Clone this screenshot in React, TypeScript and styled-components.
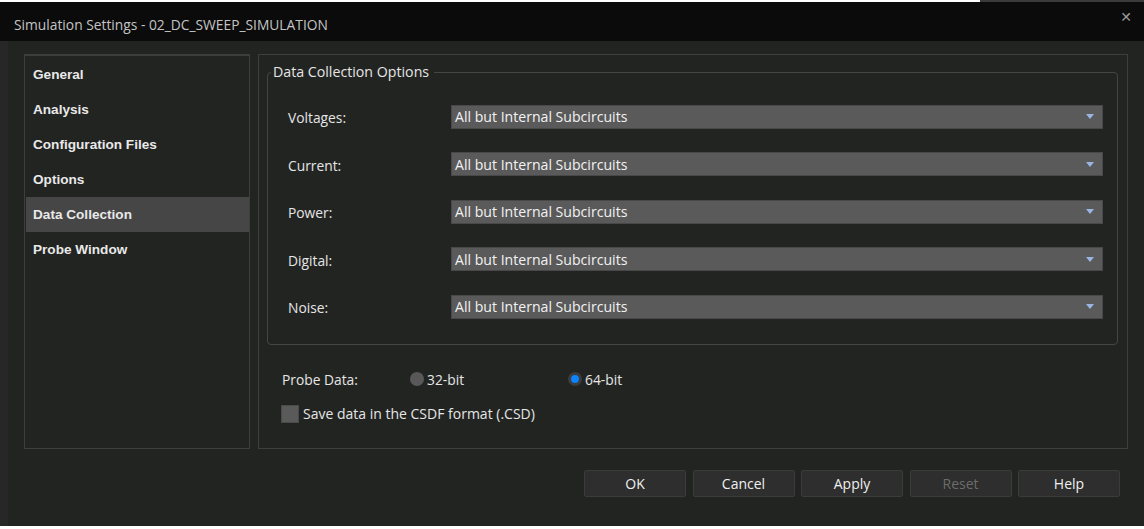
import React from 'react'
import styled, { createGlobalStyle } from 'styled-components'

const GlobalStyle = createGlobalStyle`
  html, body {
    margin: 0;
    padding: 0;
    background: #ffffff;
    overflow: hidden;
  }
`

const Screen = styled.div`
  width: 1144px;
  height: 529px;
  display: flex;
  flex-direction: column;
  background: #ffffff;
`

const TopStrip = styled.div`
  height: 2px;
  background: linear-gradient(to right, #ffffff 0, #ffffff 980px, #3a3a3a 980px);
`

const Dialog = styled.div`
  height: 524px;
  display: flex;
  flex-direction: column;
`

const TitleBar = styled.div`
  height: 39px;
  background: #0b0b0b;
  display: flex;
  align-items: center;
  justify-content: space-between;
  padding: 6px 12px 0 14px;
  box-sizing: border-box;
`

const Title = styled.div`
  font-family: 'Open Sans', sans-serif;
  font-size: 13.8px;
  color: #c4c4c4;
`

const Close = styled.div`
  color: #9a9a9a;
  font-family: 'DejaVu Sans', sans-serif;
  font-size: 14px;
  margin-top: -16px;
`

const Body = styled.div`
  flex: 1;
  background: #222422;
  border-left: 8px solid #262726;
  display: flex;
  flex-direction: column;
  padding: 13px 16px 0 16px;
`

const Panels = styled.div`
  display: flex;
  gap: 8px;
  height: 395px;
`

const Nav = styled.div`
  width: 226px;
  box-sizing: border-box;
  border: 1px solid #3d3f3d;
  border-top: 2px solid #3d3f3d;
  padding: 1px 0 0 1px;
  display: flex;
  flex-direction: column;
`

const NavItem = styled.div<{ $active?: boolean }>`
  height: 35px;
  display: flex;
  align-items: center;
  padding-left: 7px;
  font-family: 'Liberation Sans', Arial, sans-serif;
  font-weight: bold;
  font-size: 13.6px;
  color: #e9e9e9;
  background: ${(p) => (p.$active ? '#464646' : 'transparent')};
`

const Content = styled.div`
  flex: 1;
  box-sizing: border-box;
  border: 1px solid #3d3f3d;
  padding: 17px 9px 0 8px;
  display: flex;
  flex-direction: column;
`

const Group = styled.div`
  position: relative;
  height: 273px;
  box-sizing: border-box;
  border: 1px solid #444644;
  border-radius: 4px;
  padding: 20px 14px 0 20px;
  display: flex;
  flex-direction: column;
`

const Legend = styled.div`
  position: absolute;
  top: -11px;
  left: 3px;
  padding: 0 5px 0 2px;
  background: #222422;
  font-family: 'Open Sans', sans-serif;
  font-size: 14.2px;
  color: #e6e6e6;
`

const Row = styled.div`
  height: 47.5px;
  display: flex;
  align-items: center;
`

const Label = styled.div`
  width: 163px;
  font-family: 'Open Sans', sans-serif;
  font-size: 13.8px;
  color: #e6e6e6;
  padding-top: 2px;
`

const Select = styled.div`
  flex: 1;
  height: 24px;
  box-sizing: border-box;
  background: #5a5a5a;
  border: 1px solid #484848;
  display: flex;
  align-items: center;
  justify-content: space-between;
  padding: 0 8px 0 3px;
  font-family: 'Open Sans', sans-serif;
  font-size: 14.1px;
  color: #f2f2f2;
`

const Arrow = styled.div`
  width: 0;
  height: 0;
  border-left: 4px solid transparent;
  border-right: 4px solid transparent;
  border-top: 5px solid #9bb4e0;
`

const ProbeRow = styled.div`
  display: flex;
  align-items: center;
  margin-top: 24px;
  padding-left: 15px;
  height: 20px;
  font-family: 'Open Sans', sans-serif;
  font-size: 13.8px;
  color: #e6e6e6;
`

const ProbeLabel = styled.div`
  width: 128px;
`

const RadioOption = styled.div<{ $wide?: boolean }>`
  display: flex;
  align-items: center;
  gap: 3px;
  width: ${(p) => (p.$wide ? '158px' : 'auto')};
`

const Radio = styled.div<{ $checked?: boolean }>`
  width: 14px;
  height: 14px;
  border-radius: 50%;
  box-sizing: border-box;
  background: ${(p) => (p.$checked ? '#0a84ff' : '#585858')};
  border: ${(p) => (p.$checked ? '3px solid #3c3c3c' : 'none')};
`

const CheckRow = styled.div`
  display: flex;
  align-items: center;
  gap: 4px;
  margin-top: 15px;
  padding-left: 14px;
  font-family: 'Open Sans', sans-serif;
  font-size: 14px;
  color: #e6e6e6;
`

const Check = styled.div`
  width: 18px;
  height: 18px;
  background: #5a5a5a;
  border: 1px solid #4a4a4a;
  box-sizing: border-box;
`

const Buttons = styled.div`
  display: flex;
  justify-content: flex-end;
  gap: 6.5px;
  margin-top: 21px;
  padding-right: 8px;
`

const Button = styled.div<{ $disabled?: boolean }>`
  width: 102px;
  height: 27px;
  box-sizing: border-box;
  background: #2d2e2d;
  border: 1px solid #3a3b3a;
  border-radius: 2px;
  display: flex;
  align-items: center;
  justify-content: center;
  font-family: 'Open Sans', sans-serif;
  font-size: 14px;
  color: ${(p) => (p.$disabled ? '#6c6c6c' : '#f0f0f0')};
`

const navItems = ['General', 'Analysis', 'Configuration Files', 'Options', 'Data Collection', 'Probe Window']
const rows = ['Voltages:', 'Current:', 'Power:', 'Digital:', 'Noise:']

export default function App() {
  return (
    <>
      <GlobalStyle />
      <Screen>
        <TopStrip />
        <Dialog>
          <TitleBar>
            <Title>Simulation Settings - 02_DC_SWEEP_SIMULATION</Title>
            <Close>✕</Close>
          </TitleBar>
          <Body>
            <Panels>
              <Nav>
                {navItems.map((n) => (
                  <NavItem key={n} $active={n === 'Data Collection'}>
                    {n}
                  </NavItem>
                ))}
              </Nav>
              <Content>
                <Group>
                  <Legend>Data Collection Options</Legend>
                  {rows.map((r) => (
                    <Row key={r}>
                      <Label>{r}</Label>
                      <Select>
                        All but Internal Subcircuits
                        <Arrow />
                      </Select>
                    </Row>
                  ))}
                </Group>
                <ProbeRow>
                  <ProbeLabel>Probe Data:</ProbeLabel>
                  <RadioOption $wide>
                    <Radio />
                    32-bit
                  </RadioOption>
                  <RadioOption>
                    <Radio $checked />
                    64-bit
                  </RadioOption>
                </ProbeRow>
                <CheckRow>
                  <Check />
                  Save data in the CSDF format (.CSD)
                </CheckRow>
              </Content>
            </Panels>
            <Buttons>
              <Button>OK</Button>
              <Button>Cancel</Button>
              <Button>Apply</Button>
              <Button $disabled>Reset</Button>
              <Button>Help</Button>
            </Buttons>
          </Body>
        </Dialog>
      </Screen>
    </>
  )
}
